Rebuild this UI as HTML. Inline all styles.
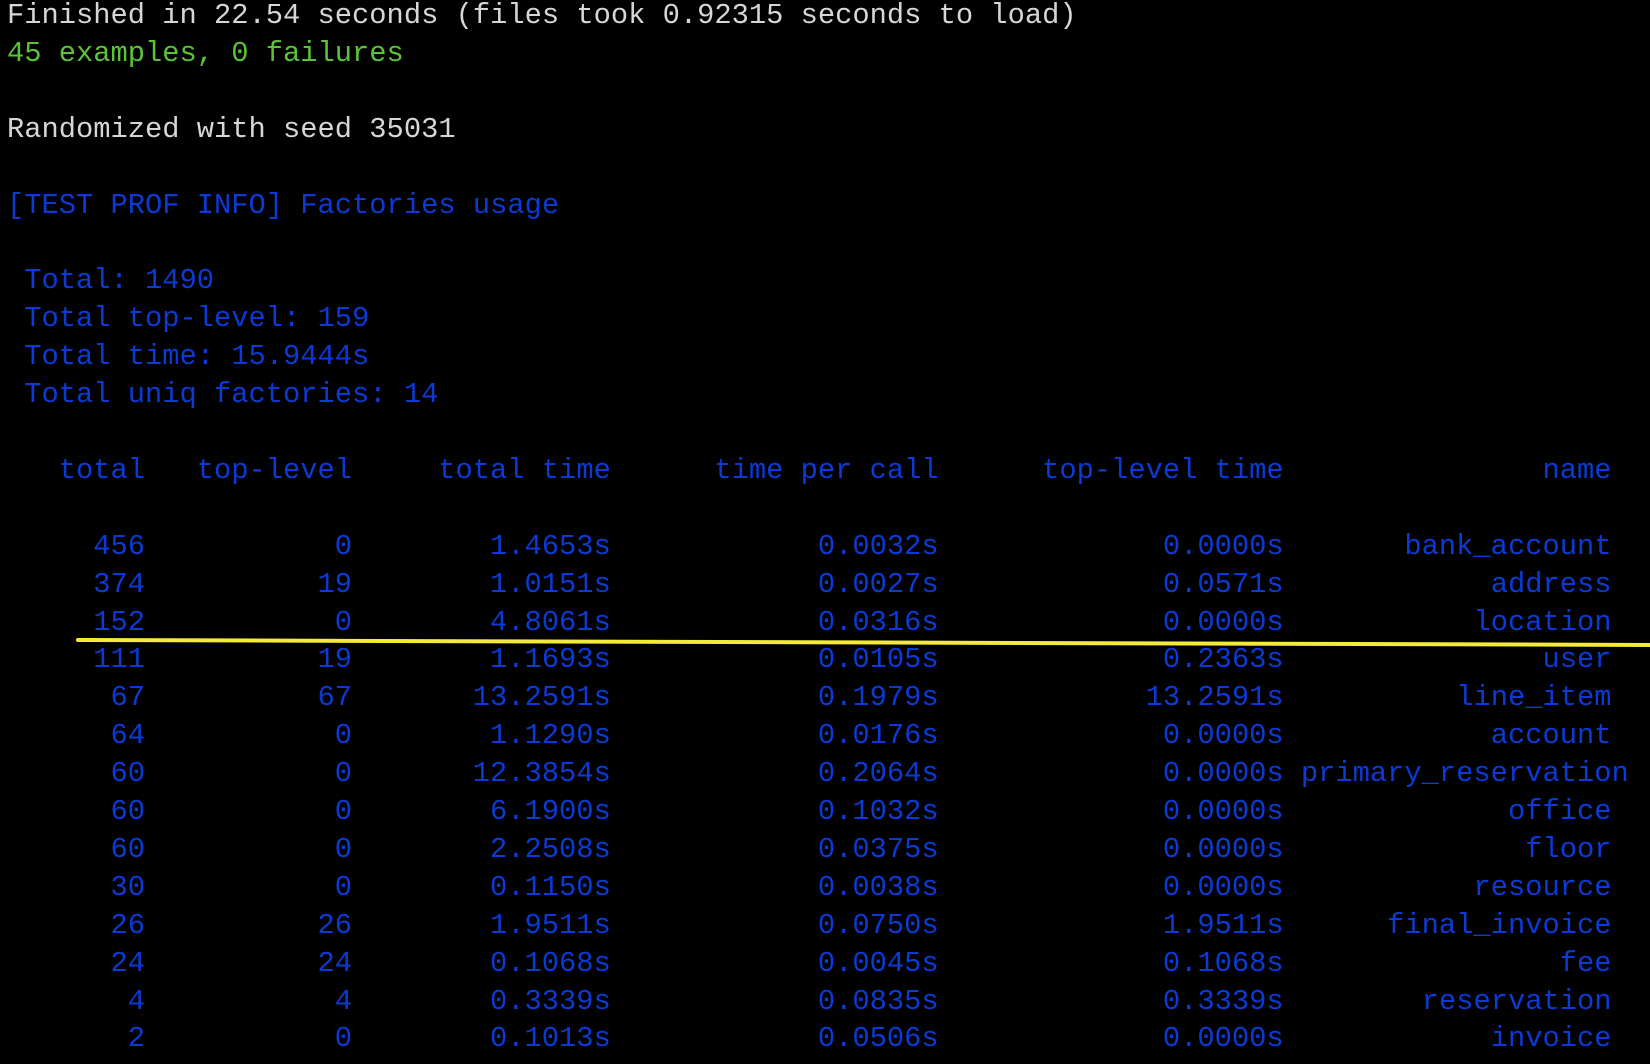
<!DOCTYPE html>
<html><head><meta charset="utf-8"><style>
html,body{margin:0;padding:0;background:#000;width:1650px;height:1064px;overflow:hidden}
.t{position:absolute;left:7px;top:-3px;font-family:"Liberation Mono",monospace;font-size:28.75px;line-height:37.9px;white-space:pre;color:#d6d6d6}
.g{color:#5cc238}.b{color:#0b3ad6}
.r span{display:inline-block;text-align:right}
.a{width:8ch}.c{width:12ch}.d{width:15ch}.e{width:19ch}.f{width:20ch}.h{width:19ch}.p{width:20ch}
.line{position:absolute;left:76px;top:638px;width:1580px;height:4px;background:#f4ea3a;border-radius:2px;transform:rotate(0.18deg);transform-origin:left center}
</style></head><body>
<div class="t"><div>Finished in 22.54 seconds (files took 0.92315 seconds to load)</div><div class="g">45 examples, 0 failures</div><div> </div><div>Randomized with seed 35031</div><div> </div><div class="b">[TEST PROF INFO] Factories usage</div><div> </div><div class="b"> Total: 1490</div><div class="b"> Total top-level: 159</div><div class="b"> Total time: 15.9444s</div><div class="b"> Total uniq factories: 14</div><div> </div><div class="b r"><span class="a">total</span><span class="c">top-level</span><span class="d">total time</span><span class="e">time per call</span><span class="f">top-level time</span><span class="h">name</span></div><div> </div><div class="b r"><span class="a">456</span><span class="c">0</span><span class="d">1.4653s</span><span class="e">0.0032s</span><span class="f">0.0000s</span><span class="h">bank_account</span></div><div class="b r"><span class="a">374</span><span class="c">19</span><span class="d">1.0151s</span><span class="e">0.0027s</span><span class="f">0.0571s</span><span class="h">address</span></div><div class="b r"><span class="a">152</span><span class="c">0</span><span class="d">4.8061s</span><span class="e">0.0316s</span><span class="f">0.0000s</span><span class="h">location</span></div><div class="b r"><span class="a">111</span><span class="c">19</span><span class="d">1.1693s</span><span class="e">0.0105s</span><span class="f">0.2363s</span><span class="h">user</span></div><div class="b r"><span class="a">67</span><span class="c">67</span><span class="d">13.2591s</span><span class="e">0.1979s</span><span class="f">13.2591s</span><span class="h">line_item</span></div><div class="b r"><span class="a">64</span><span class="c">0</span><span class="d">1.1290s</span><span class="e">0.0176s</span><span class="f">0.0000s</span><span class="h">account</span></div><div class="b r"><span class="a">60</span><span class="c">0</span><span class="d">12.3854s</span><span class="e">0.2064s</span><span class="f">0.0000s</span><span class="p">primary_reservation</span></div><div class="b r"><span class="a">60</span><span class="c">0</span><span class="d">6.1900s</span><span class="e">0.1032s</span><span class="f">0.0000s</span><span class="h">office</span></div><div class="b r"><span class="a">60</span><span class="c">0</span><span class="d">2.2508s</span><span class="e">0.0375s</span><span class="f">0.0000s</span><span class="h">floor</span></div><div class="b r"><span class="a">30</span><span class="c">0</span><span class="d">0.1150s</span><span class="e">0.0038s</span><span class="f">0.0000s</span><span class="h">resource</span></div><div class="b r"><span class="a">26</span><span class="c">26</span><span class="d">1.9511s</span><span class="e">0.0750s</span><span class="f">1.9511s</span><span class="h">final_invoice</span></div><div class="b r"><span class="a">24</span><span class="c">24</span><span class="d">0.1068s</span><span class="e">0.0045s</span><span class="f">0.1068s</span><span class="h">fee</span></div><div class="b r"><span class="a">4</span><span class="c">4</span><span class="d">0.3339s</span><span class="e">0.0835s</span><span class="f">0.3339s</span><span class="h">reservation</span></div><div class="b r"><span class="a">2</span><span class="c">0</span><span class="d">0.1013s</span><span class="e">0.0506s</span><span class="f">0.0000s</span><span class="h">invoice</span></div></div>
<div class="line"></div>
</body></html>
